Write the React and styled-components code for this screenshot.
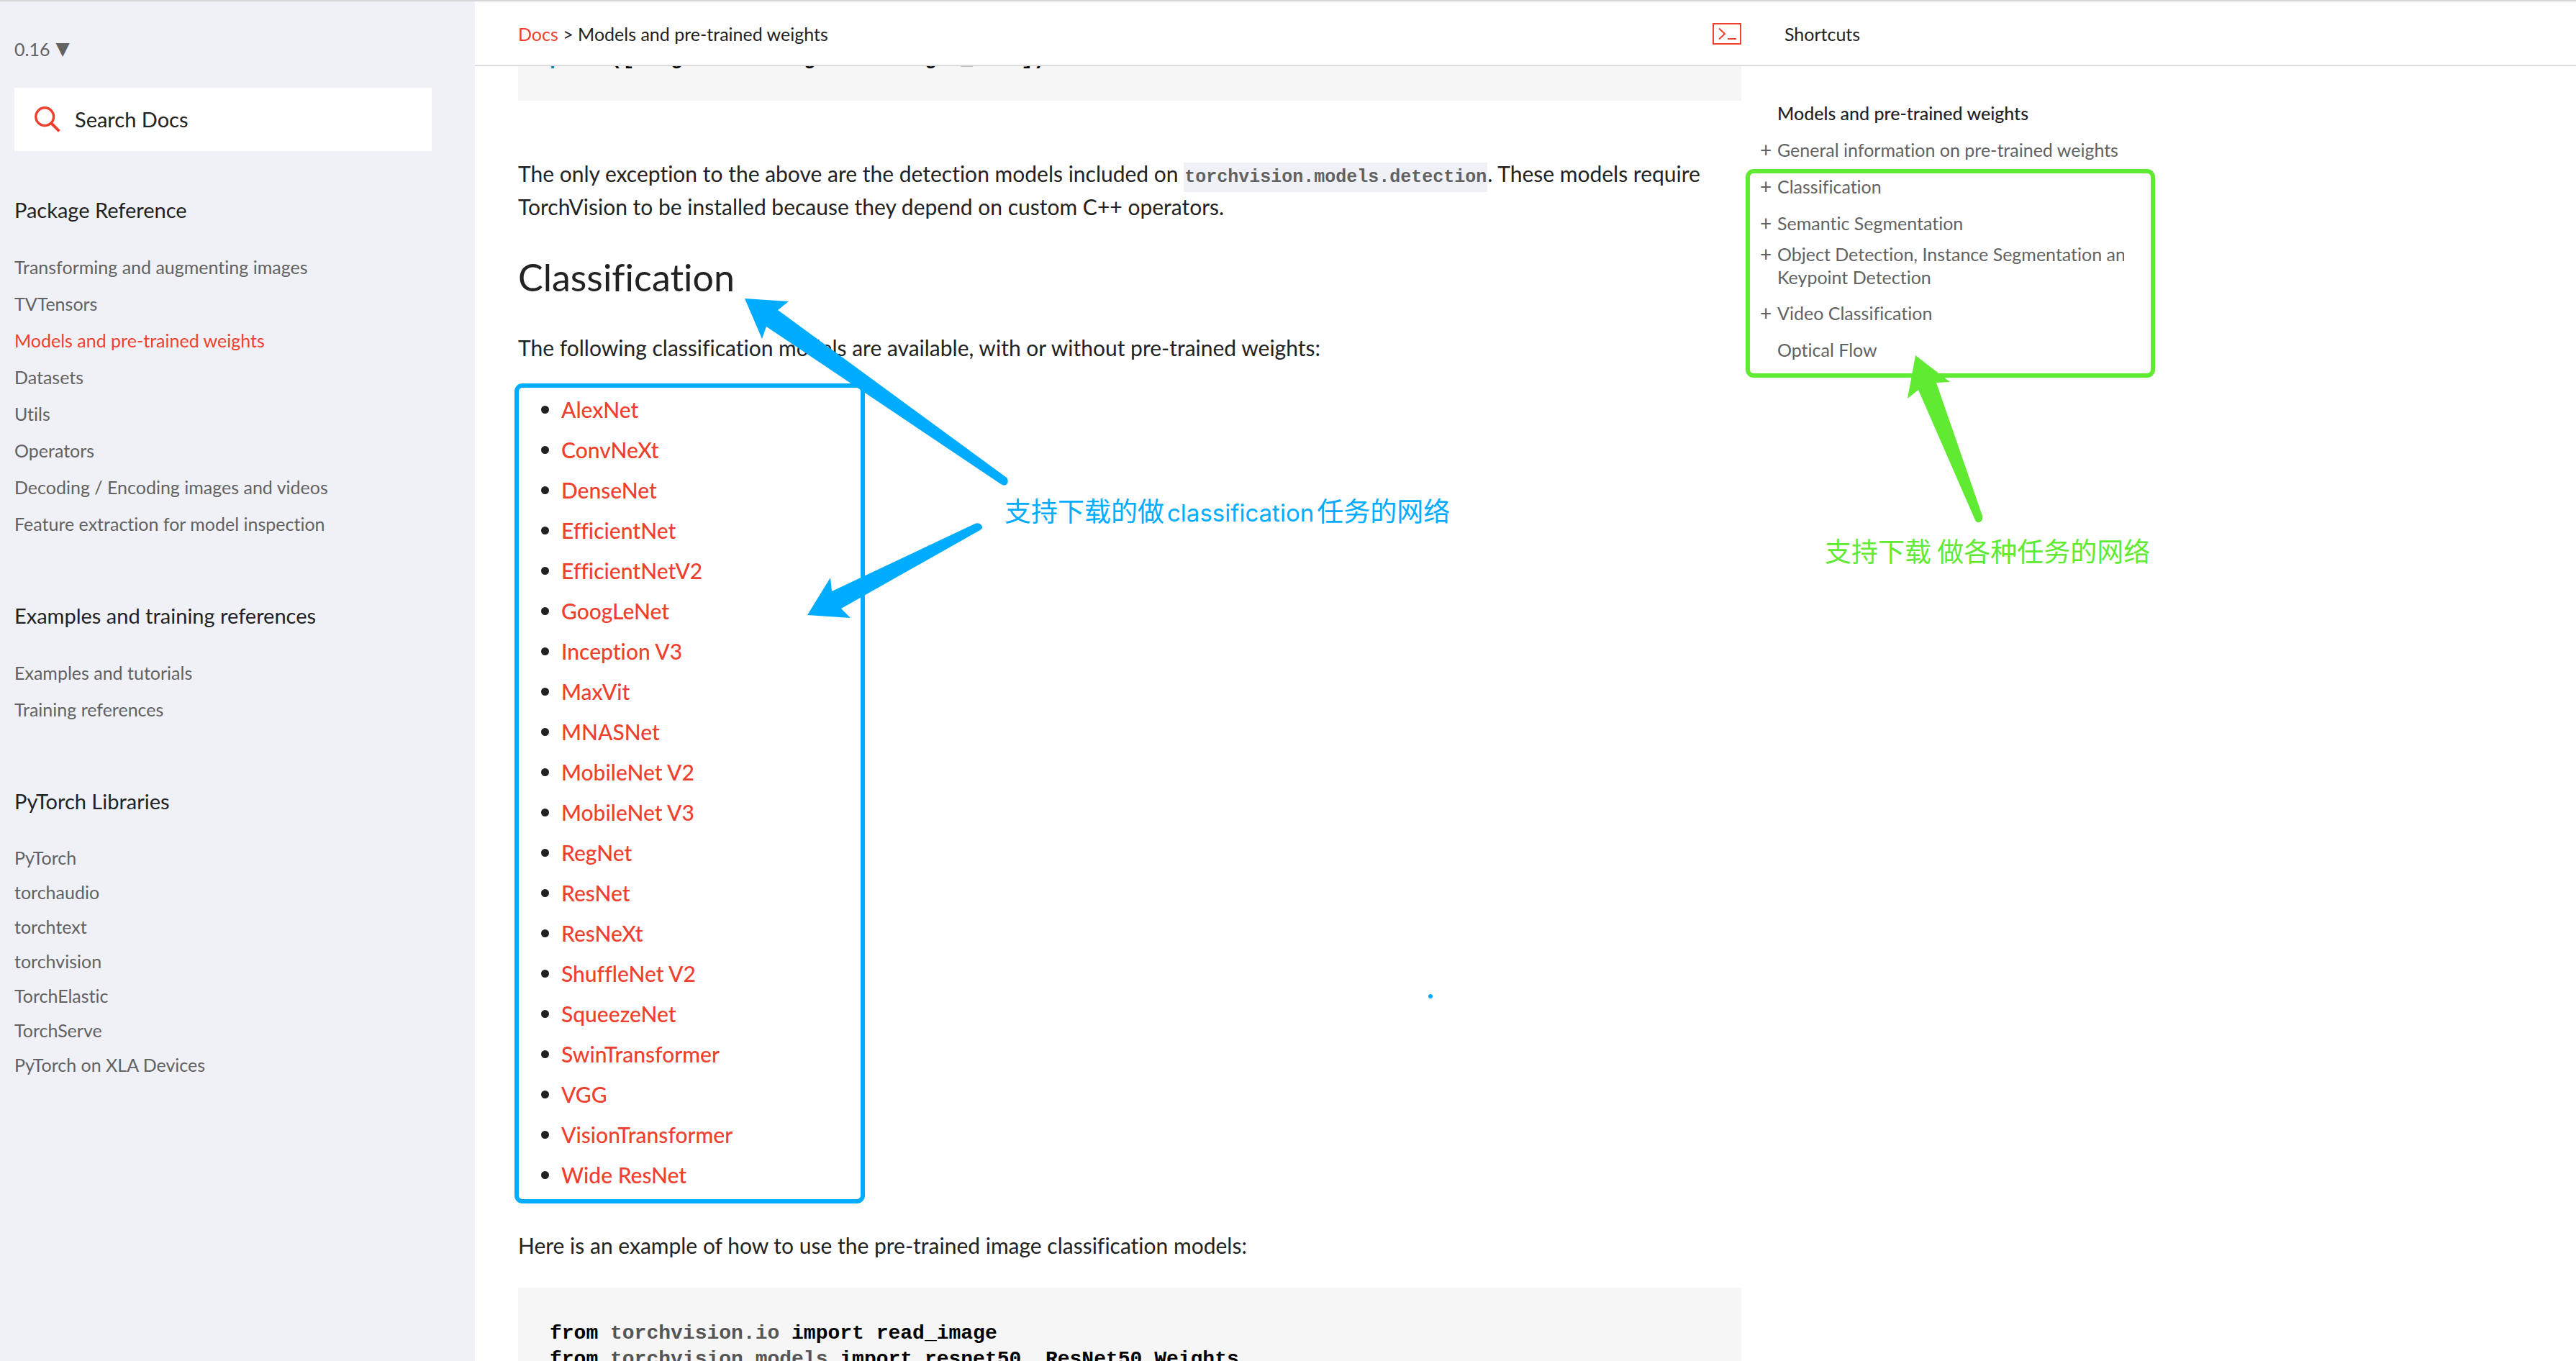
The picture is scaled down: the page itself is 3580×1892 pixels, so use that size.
import React from "react";
import styled, { createGlobalStyle } from "styled-components";

const color = {
  text: "#222222",
  muted: "#626262",
  accent: "#ee402d",
  panel: "#f0f1f6",
  code: "#f6f6f6",
  line: "#dcdcdc",
  blue: "#00acff",
  green: "#60eb32",
};
const sans = `Lato, "Noto Sans", sans-serif`;
const mono = `"Liberation Mono", "DejaVu Sans Mono", monospace`;

const GlobalStyle = createGlobalStyle`
  *, *::before, *::after { box-sizing: border-box; }
  body { margin: 0; background: #ffffff; color: ${color.text}; font-family: ${sans}; font-size: 30px; font-variant-ligatures: none; overflow: hidden; }
  h1, h2, h3, p, ul, pre { margin: 0; padding: 0; font-weight: 400; }
  ul { list-style: none; }
  a { color: inherit; text-decoration: none; }
`;

const Page = styled.div`
  position: relative;
  display: grid;
  grid-template-columns: 660px 1fr;
  height: 100vh;
  overflow: hidden;
  border-top: 2px solid #d6d6d6;
`;

const Sidebar = styled.aside`
  padding: 46px 60px 0 20px;
  background: ${color.panel};
`;

const Version = styled.a`
  display: flex;
  gap: 8px;
  font-size: 25px;
  line-height: 40px;
  color: ${color.muted};
`;

const Caret = styled.span`
  font-family: "DejaVu Sans", sans-serif;
`;

const SearchBox = styled.label`
  display: flex;
  align-items: center;
  gap: 20px;
  height: 88px;
  margin-top: 34px;
  padding: 0 28px;
  background: #ffffff;
`;

const SearchInput = styled.input`
  flex: 1;
  min-width: 0;
  padding: 0;
  border: 0;
  outline: 0;
  background: transparent;
  color: ${color.text};
  font-family: ${sans};
  font-size: 29px;
  line-height: 40px;
  &::placeholder { color: ${color.text}; opacity: 1; }
`;

const NavGroups = styled.nav`
  display: flex;
  flex-direction: column;
  gap: 77px;
  margin-top: 57px;
`;

const NavTitle = styled.h3`
  margin-bottom: 29px;
  font-size: 29px;
  line-height: 50px;
`;

const NavItem = styled.li`
  font-size: 25px;
  line-height: ${(p) => (p.$tight ? "48px" : "51px")};
  color: ${(p) => (p.$active ? color.accent : color.muted)};
`;

const Main = styled.main`
  display: flex;
  flex-direction: column;
  min-width: 0;
  min-height: 0;
`;

const Header = styled.header`
  display: flex;
  flex: none;
  height: 90px;
  padding: 2px 0 0 60px;
  border-bottom: 2px solid ${color.line};
`;

const HeaderMain = styled.div`
  display: flex;
  flex: 0 1 1700px;
  align-items: center;
  justify-content: space-between;
`;

const Crumbs = styled.div`
  font-size: 25px;
  line-height: 32px;
`;

const CrumbLink = styled.a`
  color: ${color.accent};
`;

const IconButton = styled.button`
  display: flex;
  padding: 0;
  border: 0;
  background: none;
  cursor: pointer;
`;

const Shortcuts = styled.div`
  display: flex;
  align-items: center;
  margin-left: 60px;
  font-size: 25px;
  line-height: 32px;
`;

const Body = styled.div`
  display: flex;
  flex: 1;
  min-height: 0;
  overflow: hidden;
  padding-left: 60px;
`;

const Article = styled.article`
  flex: 0 1 1700px;
  min-width: 0;
`;

const CodeBlock = styled.pre`
  margin-top: 36px;
  padding: 46px 44px 42px;
  background: ${color.code};
  color: #000000;
  font-family: ${mono};
  font-size: 28px;
  font-weight: 700;
  line-height: 36px;
`;

const ScrolledCode = styled(CodeBlock)`
  margin-top: -28px;
  padding: 0 44px 40px;
`;

const Builtin = styled.span`
  color: #0086b3;
`;

const ModuleName = styled.span`
  color: #555555;
`;

const Paragraph = styled.p`
  margin-top: ${(p) => p.$gap}px;
  font-size: 30px;
  line-height: 46px;
`;

const InlineCode = styled.code`
  padding: 6px 1px;
  background: ${color.panel};
  color: ${color.muted};
  font-family: ${mono};
  font-size: 25px;
  font-weight: 700;
  line-height: 28px;
`;

const Title = styled.h2`
  margin-top: 48px;
  font-size: 52px;
  line-height: 54px;
`;

const ModelList = styled.ul`
  margin: 35px 0 0 32px;
`;

const ModelItem = styled.li`
  display: flex;
  align-items: center;
  gap: 17px;
  font-weight: 500;
  line-height: 56px;
  color: ${color.accent};
  &::before {
    content: "";
    width: 11px;
    height: 11px;
    border-radius: 50%;
    background: ${color.text};
  }
`;

const Toc = styled.nav`
  width: 532px;
  padding: 40px 0 0 26px;
  overflow: hidden;
  color: ${color.muted};
  font-size: 25px;
`;

const TocItem = styled.li`
  display: flex;
  align-items: flex-start;
  padding: ${(p) => (p.$wrapped ? "1px 0 9px 0" : "0")};
  line-height: ${(p) => (p.$wrapped ? "32px" : "51px")};
  color: ${(p) => (p.$current ? color.text : "inherit")};
  font-weight: ${(p) => (p.$current ? 500 : 400)};
  padding-left: ${(p) => (p.$plain ? "24px" : "0")};
  white-space: pre;
`;

const Expand = styled.button`
  flex: none;
  width: 24px;
  padding: 0;
  border: 0;
  background: none;
  color: inherit;
  font-family: ${sans};
  font-size: 28px;
  line-height: inherit;
  text-align: left;
`;

const Marks = styled.svg`
  position: absolute;
  top: -2px;
  left: 0;
  pointer-events: none;
`;

const Note = styled.div`
  position: absolute;
  top: ${(p) => p.$top}px;
  left: ${(p) => p.$left}px;
  color: ${(p) => p.$color};
  font-family: "Noto Sans CJK SC", sans-serif;
  font-size: 37px;
  line-height: 44px;
  white-space: nowrap;
`;

const NoteWord = styled.span`
  padding: 0 4px;
  font-family: Inter, sans-serif;
  font-size: 33px;
`;

const groups = [
  {
    title: "Package Reference",
    items: [
      "Transforming and augmenting images",
      "TVTensors",
      "Models and pre-trained weights",
      "Datasets",
      "Utils",
      "Operators",
      "Decoding / Encoding images and videos",
      "Feature extraction for model inspection",
    ],
  },
  {
    title: "Examples and training references",
    items: ["Examples and tutorials", "Training references"],
  },
  {
    title: "PyTorch Libraries",
    tight: true,
    items: [
      "PyTorch",
      "torchaudio",
      "torchtext",
      "torchvision",
      "TorchElastic",
      "TorchServe",
      "PyTorch on XLA Devices",
    ],
  },
];

const models = [
  "AlexNet", "ConvNeXt", "DenseNet", "EfficientNet", "EfficientNetV2",
  "GoogLeNet", "Inception V3", "MaxVit", "MNASNet", "MobileNet V2",
  "MobileNet V3", "RegNet", "ResNet", "ResNeXt", "ShuffleNet V2",
  "SqueezeNet", "SwinTransformer", "VGG", "VisionTransformer", "Wide ResNet",
];

const toc = [
  { text: "Models and pre-trained weights", plain: true, current: true },
  { text: "General information on pre-trained weights" },
  { text: "Classification" },
  { text: "Semantic Segmentation" },
  { text: "Object Detection, Instance Segmentation and\nKeypoint Detection", wrapped: true },
  { text: "Video Classification" },
  { text: "Optical Flow", plain: true },
];

function SearchIcon() {
  return (
    <svg width="36" height="36" viewBox="0 0 36 36" fill="none" stroke={color.accent} strokeWidth="3.4" aria-hidden="true">
      <circle cx="14.2" cy="14.2" r="12.4" />
      <path d="M23 23 L34.4 34.4" strokeWidth="4" />
    </svg>
  );
}

function TerminalIcon() {
  return (
    <svg width="40" height="30" viewBox="0 0 40 30" fill="none" stroke={color.accent} strokeWidth="2" aria-hidden="true">
      <rect x="1" y="1" width="38" height="28" />
      <path d="M9 7.5 L17 15 L9 22.5" />
      <path d="M21 22 H33" />
    </svg>
  );
}

function Annotations() {
  return (
    <>
      <Marks width="3580" height="1892" viewBox="0 0 3580 1892" fill="none" aria-hidden="true">
        <rect x="718" y="536" width="481" height="1134" rx="8" stroke={color.blue} strokeWidth="6" />
        <rect x="2429" y="238" width="563" height="284" rx="8" stroke={color.green} strokeWidth="6" />
        <path
          fill={color.blue}
          d="M1035 415 L1096 419 L1081 431 L1399 664 Q1402 668 1400 672 Q1397 677 1391 673 L1065 454 L1059 471 Z"
        />
        <path
          fill={color.blue}
          d="M1122 855 L1154 803 L1156 822 L1355 728 Q1361 726 1364 730 Q1367 735 1362 737 L1169 846 L1182 859 Z"
        />
        <path
          fill={color.green}
          d="M2662 494 L2710 531 L2691 532 L2755 717 Q2756 724 2751 726 Q2747 727 2745 723 L2666 542 L2651 554 Z"
        />
        <circle cx="1988" cy="1385" r="3" fill={color.blue} />
      </Marks>
      <Note $top={685} $left={1396} $color={color.blue}>支持下载的做<NoteWord>classification</NoteWord>任务的网络</Note>
      <Note $top={741} $left={2536} $color={color.green}>支持下载 做各种任务的网络</Note>
    </>
  );
}

export default function App() {
  return (
    <>
      <GlobalStyle />
      <Page>
        <Sidebar>
          <Version href="#versions">0.16 <Caret>▼</Caret></Version>
          <SearchBox>
            <SearchIcon />
            <SearchInput type="text" placeholder="Search Docs" aria-label="Search Docs" />
          </SearchBox>
          <NavGroups>
            {groups.map((g) => (
              <section key={g.title}>
                <NavTitle>{g.title}</NavTitle>
                <ul>
                  {g.items.map((t) => (
                    <NavItem key={t} $tight={g.tight} $active={t === "Models and pre-trained weights"}>
                      <a href="#nav">{t}</a>
                    </NavItem>
                  ))}
                </ul>
              </section>
            ))}
          </NavGroups>
        </Sidebar>
        <Main>
          <Header>
            <HeaderMain>
              <Crumbs><CrumbLink href="#docs">Docs</CrumbLink> &gt; Models and pre-trained weights</Crumbs>
              <IconButton type="button" aria-label="View source"><TerminalIcon /></IconButton>
            </HeaderMain>
            <Shortcuts>Shortcuts</Shortcuts>
          </Header>
          <Body>
            <Article>
              <ScrolledCode><Builtin>print</Builtin>([weight for weight in weight_enum])</ScrolledCode>
              <Paragraph $gap={78}>
                The only exception to the above are the detection models included on{" "}
                <InlineCode>torchvision.models.detection</InlineCode>. These models require TorchVision to be
                installed because they depend on custom C++ operators.
              </Paragraph>
              <Title>Classification</Title>
              <Paragraph $gap={48}>
                The following classification models are available, with or without pre-trained weights:
              </Paragraph>
              <ModelList>
                {models.map((m) => (
                  <ModelItem key={m}><a href="#model">{m}</a></ModelItem>
                ))}
              </ModelList>
              <Paragraph $gap={47}>
                Here is an example of how to use the pre-trained image classification models:
              </Paragraph>
              <CodeBlock>
                from <ModuleName>torchvision.io</ModuleName> import read_image{"\n"}
                from <ModuleName>torchvision.models</ModuleName> import resnet50, ResNet50_Weights
              </CodeBlock>
            </Article>
            <Toc>
              <ul>
                {toc.map((t) => (
                  <TocItem key={t.text} $plain={t.plain} $current={t.current} $wrapped={t.wrapped}>
                    {!t.plain && <Expand type="button" aria-label={`Expand ${t.text}`}>+</Expand>}
                    <a href="#section">{t.text}</a>
                  </TocItem>
                ))}
              </ul>
            </Toc>
          </Body>
        </Main>
        <Annotations />
      </Page>
    </>
  );
}
